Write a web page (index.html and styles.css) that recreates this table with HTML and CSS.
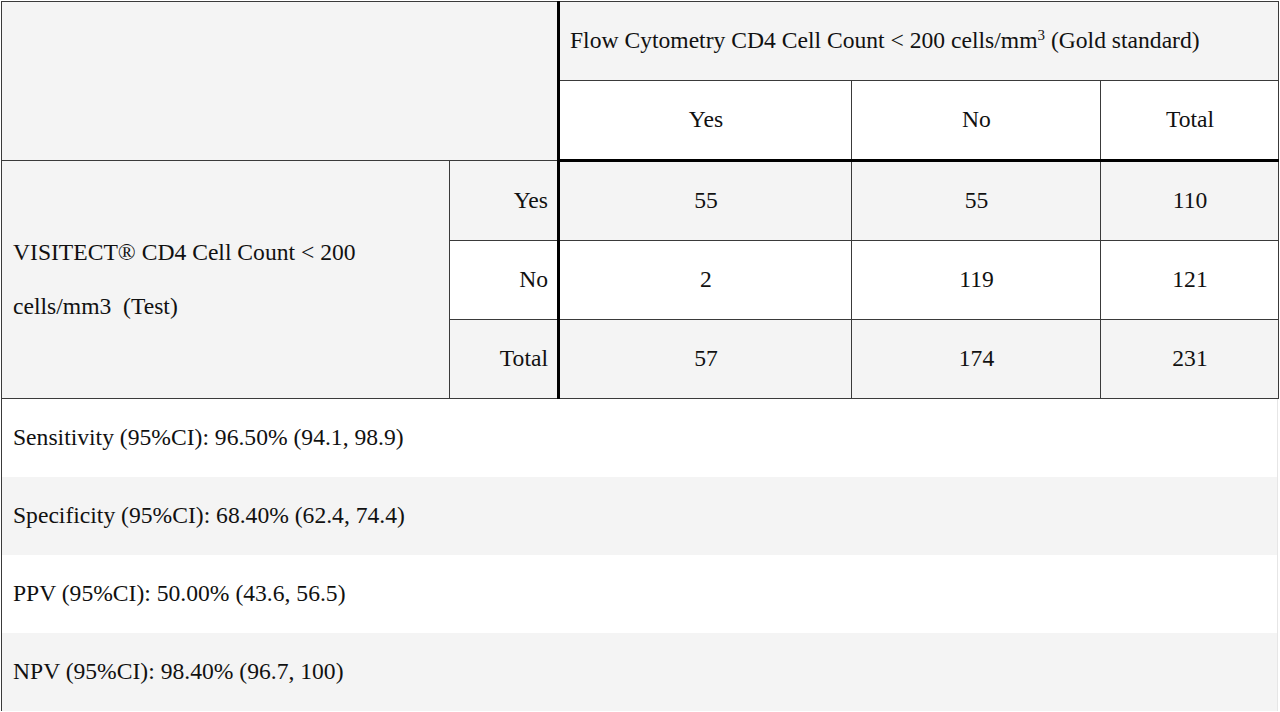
FILE: index.html
```html
<!DOCTYPE html>
<html>
<head>
<meta charset="utf-8">
<link rel="stylesheet" href="styles.css">
</head>
<body>
<div class="page">
<table class="grid">
  <colgroup>
    <col class="c1"><col class="c2"><col class="c3"><col class="c4"><col class="c5">
  </colgroup>
  <tr class="shade">
    <td colspan="2" rowspan="2" class="blank"></td>
    <td colspan="3" class="left thick-l">Flow Cytometry CD4 Cell Count &lt; 200 cells/mm<sup>3</sup> (Gold standard)</td>
  </tr>
  <tr class="plain">
    <td class="center thick-l">Yes</td>
    <td class="center">No</td>
    <td class="center">Total</td>
  </tr>
  <tr class="shade thick-t">
    <td rowspan="3" class="left label shade-cell">VISITECT® CD4 Cell Count &lt; 200<br>cells/mm3&nbsp; (Test)</td>
    <td class="right">Yes</td>
    <td class="center thick-l">55</td>
    <td class="center">55</td>
    <td class="center">110</td>
  </tr>
  <tr class="plain">
    <td class="right">No</td>
    <td class="center thick-l">2</td>
    <td class="center">119</td>
    <td class="center">121</td>
  </tr>
  <tr class="shade">
    <td class="right">Total</td>
    <td class="center thick-l">57</td>
    <td class="center">174</td>
    <td class="center">231</td>
  </tr>
</table>
<div class="stats">
  <div class="stat">Sensitivity (95%CI): 96.50% (94.1, 98.9)</div>
  <div class="stat alt">Specificity (95%CI): 68.40% (62.4, 74.4)</div>
  <div class="stat">PPV (95%CI): 50.00% (43.6, 56.5)</div>
  <div class="stat alt">NPV (95%CI): 98.40% (96.7, 100)</div>
</div>
</div>
</body>
</html>
```
FILE: styles.css
```css
html, body {
  margin: 0;
  padding: 0;
  background: #ffffff;
}
.page {
  padding: 1px 0 0 1px;
  width: 1277px;
  font-family: "Liberation Serif", "Times New Roman", serif;
  font-size: 23.6px;
  color: #111;
}
.grid {
  border-collapse: collapse;
  table-layout: fixed;
  width: 1277px;
}
.c1 { width: 448px; }
.c2 { width: 109px; }
.c3 { width: 293px; }
.c4 { width: 249px; }
.c5 { width: 178px; }
.grid td {
  border: 1px solid #3a3a3a;
  height: 76px;
  padding: 0 9px 2px 10px;
  vertical-align: middle;
  line-height: 26px;
}
.grid tr.shade td { background: #f4f4f4; }
.grid tr.plain td { background: #ffffff; }
.grid td.blank { background: #f4f4f4; }
.grid td.shade-cell { background: #f4f4f4; }
.grid td.left { text-align: left; }
.grid td.right { text-align: right; }
.grid td.center { text-align: center; }
.grid td.label { line-height: 54px; padding-left: 11px; }
.grid td.thick-l { border-left: 3px solid #000; }
.grid tr.thick-t td.center,
.grid tr.thick-t td.thick-l { border-top: 3px solid #000; }
sup {
  font-size: 15px;
  line-height: 0;
  vertical-align: 8px;
}
.stats {
  border-left: 1px solid #3a3a3a;
  border-right: 1px solid #e6e6e6;
  width: 1275px;
}
.stat {
  height: 76px;
  padding-bottom: 2px;
  display: flex;
  align-items: center;
  padding-left: 11px;
  background: #ffffff;
}
.stat.alt { background: #f4f4f4; }
```
